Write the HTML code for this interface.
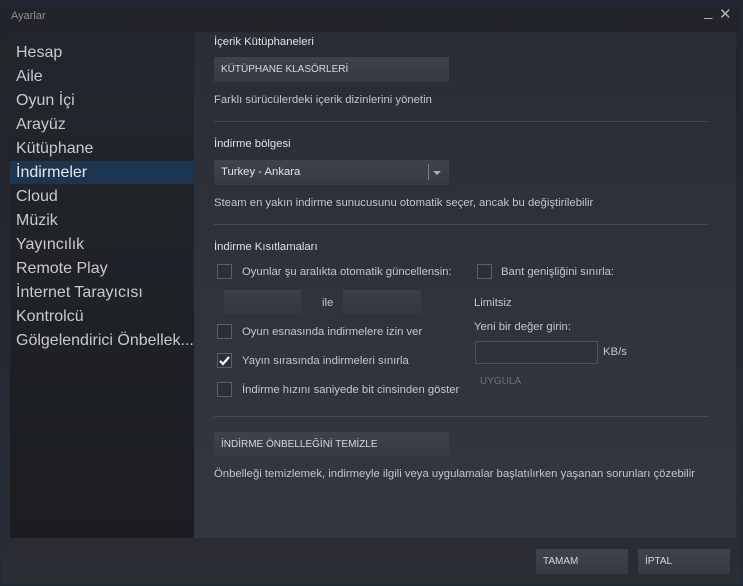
<!DOCTYPE html>
<html><head><meta charset="utf-8"><style>
*{margin:0;padding:0;box-sizing:border-box}
body{width:743px;height:586px;overflow:hidden;background:#25282e;font-family:"Liberation Sans",Arial,sans-serif;position:relative;color:#c6c8cc}
.win{position:absolute;left:0;top:0;width:743px;height:586px;border:1px solid #1c2a3e;background:linear-gradient(#212429,#2a2d33)}
.title{position:absolute;left:11px;top:10px;font-size:11px;color:#8b8e93}
.ctl{position:absolute;top:6px;color:#b0b3b7;font-size:15px}
.side{position:absolute;left:10px;top:32px;width:184px;height:506px;background:linear-gradient(#23272d,#1b1d21)}
.side div{position:absolute;left:0;width:184px;height:24px;line-height:24px;padding-left:6px;font-size:16px;color:#c8cacd;white-space:nowrap;overflow:hidden}
.side .sel{background:#1c3550;color:#e6e8ea}
.main{position:absolute;left:194px;top:32px;width:542px;height:506px;background:linear-gradient(#2a2e34,#33373f)}
.t{position:absolute;font-size:11.3px;color:#c4c6ca;white-space:nowrap;margin-top:1px}
.h{color:#dfe1e4}
.btn{position:absolute;background:linear-gradient(#3e434c,#363a42);font-size:10px;color:#d5d7da;line-height:25px;padding-left:7px}
.hr{position:absolute;left:20px;width:494px;height:1px;background:#454951}
.cb{position:absolute;width:15px;height:15px;border:1px solid #5a5e66;background:#2b2f36}
.in{position:absolute;height:24px;background:linear-gradient(#3a3f47,#33373f)}
</style></head><body>
<div class="win"></div>
<div class="title">Ayarlar</div>
<div class="ctl" style="left:704px;top:3px">_</div>
<div class="ctl" style="left:719px;top:5px">✕</div>
<div class="side">
<div style="top:9px">Hesap</div>
<div style="top:33px">Aile</div>
<div style="top:57px">Oyun İçi</div>
<div style="top:81px">Arayüz</div>
<div style="top:105px">Kütüphane</div>
<div class="sel" style="top:129px;height:23px">İndirmeler</div>
<div style="top:153px">Cloud</div>
<div style="top:177px">Müzik</div>
<div style="top:201px">Yayıncılık</div>
<div style="top:225px">Remote Play</div>
<div style="top:249px">İnternet Tarayıcısı</div>
<div style="top:273px">Kontrolcü</div>
<div style="top:297px">Gölgelendirici Önbellek...</div>
</div>
<div class="main">
<div class="t h" style="left:20px;top:3px">İçerik Kütüphaneleri</div>
<div class="btn" style="left:20px;top:25px;width:235px">KÜTÜPHANE KLASÖRLERİ</div>
<div class="t" style="left:20px;top:61px">Farklı sürücülerdeki içerik dizinlerini yönetin</div>
<div class="hr" style="top:89px"></div>
<div class="t h" style="left:20px;top:105px">İndirme bölgesi</div>
<div class="btn" style="left:20px;top:128px;width:235px;font-size:11.3px;color:#e2e4e6">Turkey - Ankara
<span style="position:absolute;left:214px;top:4px;width:1px;height:16px;background:#7a7e85"></span>
<span style="position:absolute;left:219px;top:11px;border-left:4px solid transparent;border-right:4px solid transparent;border-top:4px solid #aeb1b5"></span></div>
<div class="t" style="left:20px;top:164px">Steam en yakın indirme sunucusunu otomatik seçer, ancak bu değiştirilebilir</div>
<div class="hr" style="top:192px"></div>
<div class="t h" style="left:20px;top:208px">İndirme Kısıtlamaları</div>
<div class="cb" style="left:23px;top:232px"></div>
<div class="t" style="left:48px;top:233px">Oyunlar şu aralıkta otomatik güncellensin:</div>
<div class="cb" style="left:283px;top:232px"></div>
<div class="t" style="left:307px;top:233px">Bant genişliğini sınırla:</div>
<div class="in" style="left:30px;top:258px;width:78px"></div>
<div class="t" style="left:128px;top:264px">ile</div>
<div class="in" style="left:149px;top:258px;width:78px"></div>
<div class="t" style="left:280px;top:264px">Limitsiz</div>
<div class="cb" style="left:23px;top:292px"></div>
<div class="t" style="left:48px;top:293px">Oyun esnasında indirmelere izin ver</div>
<div class="t" style="left:280px;top:288px">Yeni bir değer girin:</div>
<div style="position:absolute;left:281px;top:309px;width:123px;height:23px;border:1px solid #4e535b;background:#2e3239"></div>
<div class="t" style="left:409px;top:313px">KB/s</div>
<div class="cb" style="left:23px;top:321px"><svg width="13" height="13" style="position:absolute;left:0;top:0"><path d="M2 7 L5 10 L11 3" stroke="#fff" stroke-width="2.2" fill="none"/></svg></div>
<div class="t" style="left:48px;top:322px">Yayın sırasında indirmeleri sınırla</div>
<div style="position:absolute;left:280px;top:336px;width:70px;height:25px;background:#30343b"></div>
<div class="t" style="left:286px;top:343px;font-size:10px;color:#6e7278">UYGULA</div>
<div class="cb" style="left:23px;top:350px"></div>
<div class="t" style="left:48px;top:351px">İndirme hızını saniyede bit cinsinden göster</div>
<div class="hr" style="top:384px"></div>
<div class="btn" style="left:20px;top:400px;width:235px">İNDİRME ÖNBELLEĞİNİ TEMİZLE</div>
<div class="t" style="left:20px;top:435px">Önbelleği temizlemek, indirmeyle ilgili veya uygulamalar başlatılırken yaşanan sorunları çözebilir</div>
</div>
<div class="btn" style="left:536px;top:549px;width:92px;color:#c9d8ea">TAMAM</div>
<div class="btn" style="left:638px;top:549px;width:92px">İPTAL</div>
</body></html>
